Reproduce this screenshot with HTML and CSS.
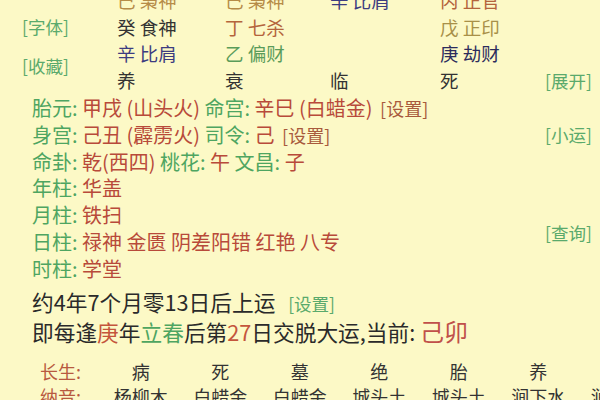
FILE: index.html
```html
<!DOCTYPE html>
<html lang="zh-CN">
  <head>
    <meta charset="UTF-8" />
    <title>排盘</title>
    <link rel="stylesheet" href="styles.css">
  </head>
  <body>
    <div class="pillars">
      <div class="cell"></div>
      <div class="cell gold">己 枭神</div>
      <div class="cell gold">己 枭神</div>
      <div class="cell navy">辛 比肩</div>
      <div class="cell brown">丙 正官</div>
      <div class="cell"></div>

      <div class="tools">
        <span class="tag">[字体]</span>
        <span class="tag">[收藏]</span>
      </div>
      <div class="cell">癸 食神</div>
      <div class="cell brown">丁 七杀</div>
      <div class="cell"></div>
      <div class="cell olive">戊 正印</div>
      <div class="cell"></div>

      <div class="cell navy">辛 比肩</div>
      <div class="cell green">乙 偏财</div>
      <div class="cell"></div>
      <div class="cell deep">庚 劫财</div>
      <div class="cell"></div>

      <div class="cell">养</div>
      <div class="cell">衰</div>
      <div class="cell">临</div>
      <div class="cell">死</div>
      <div class="cell"><span class="tag">[展开]</span></div>
    </div>

    <div class="info">
      <div class="info-list">
        <div class="line"><span class="key">胎元:</span> <span class="val">甲戌 (山头火)</span> <span class="key">命宫:</span> <span class="val">辛巳 (白蜡金)</span> <span class="set">[设置]</span></div>
        <div class="line"><span class="key">身宫:</span> <span class="val">己丑 (霹雳火)</span> <span class="key">司令:</span> <span class="val">己</span> <span class="set">[设置]</span></div>
        <div class="line"><span class="key">命卦:</span> <span class="val">乾(西四)</span> <span class="key">桃花:</span> <span class="val">午</span> <span class="key">文昌:</span> <span class="val">子</span></div>
        <div class="line"><span class="key">年柱:</span> <span class="val">华盖</span></div>
        <div class="line"><span class="key">月柱:</span> <span class="val">铁扫</span></div>
        <div class="line"><span class="key">日柱:</span> <span class="val">禄神 金匮 阴差阳错 红艳 八专</span></div>
        <div class="line"><span class="key">时柱:</span> <span class="val">学堂</span></div>
      </div>
      <div class="side">
        <span class="tag">[小运]</span>
        <span class="tag query">[查询]</span>
      </div>
    </div>

    <div class="luck">
      <div class="luck-line">约4年7个月零13日后上运 <span class="tag small">[设置]</span></div>
      <div class="luck-line">即每逢<span class="hl-red">庚</span>年<span class="hl-green">立春</span>后第<span class="hl-red">27</span>日交脱大运,当前: <span class="current">己卯</span></div>
    </div>

    <div class="table">
      <div class="label">长生:</div>
      <div>病</div>
      <div>死</div>
      <div>墓</div>
      <div>绝</div>
      <div>胎</div>
      <div>养</div>
      <div></div>

      <div class="label">纳音:</div>
      <div>杨柳木</div>
      <div>白蜡金</div>
      <div>白蜡金</div>
      <div>城头土</div>
      <div>城头土</div>
      <div>涧下水</div>
      <div>涧下水</div>
    </div>
  </body>
</html>
```

FILE: styles.css
```css
* {
  box-sizing: border-box;
}

body {
  margin: 0;
  width: 600px;
  height: 400px;
  overflow: hidden;
  background: #fcf9c6;
  color: #333;
  font-family: "Noto Sans CJK SC", "Noto Sans", sans-serif;
}

.tag {
  color: #5aaa6c;
  font-size: 17.5px;
}

/* top pillars */
.pillars {
  display: grid;
  grid-template-columns: 117px 108px 105px 110px 105px 1fr;
  grid-auto-rows: 26.5px;
  margin-top: -13px;
  font-size: 18.5px;
}

.cell {
  line-height: 26.5px;
  white-space: nowrap;
}

.tools {
  grid-row: 2 / span 3;
  display: flex;
  flex-direction: column;
  gap: 12.5px;
  padding-left: 22px;
  line-height: 26.5px;
}

.gold { color: #b68c48; }
.brown { color: #b4643c; }
.olive { color: #a89048; }
.navy { color: #3c3c80; }
.deep { color: #2c2c5c; }
.green { color: #5a9c5a; }

/* info block */
.info {
  display: flex;
  margin-top: 2px;
  padding-left: 32px;
  font-size: 20px;
}

.info-list {
  flex: 1;
}

.line {
  line-height: 26.8px;
  white-space: nowrap;
}

.key {
  color: #4ea561;
}

.val {
  color: #b84a3a;
}

.set {
  color: #a85a3c;
  font-size: 18px;
  margin-left: 3px;
}

.side {
  width: 55px;
  display: flex;
  flex-direction: column;
  padding-top: 26.8px;
  line-height: 26.8px;
}

.query {
  margin-top: 71px;
}

/* luck */
.luck {
  padding-left: 32px;
  margin-top: 5px;
  font-size: 21.7px;
  color: #2a2a2a;
}

.luck-line {
  line-height: 27px;
  white-space: nowrap;
}

.small {
  margin-left: 8px;
}

.hl-red { color: #c4553c; }
.hl-green { color: #4ea561; }

.current {
  color: #c0504a;
  font-size: 24px;
}

/* bottom table */
.table {
  display: grid;
  grid-template-columns: 101px repeat(7, 79.5px);
  grid-auto-rows: 25px;
  margin-top: 14px;
  font-size: 18px;
  line-height: 25px;
  text-align: center;
  white-space: nowrap;
}

.table .label {
  text-align: left;
  padding-left: 40px;
  color: #b85a40;
}
```
